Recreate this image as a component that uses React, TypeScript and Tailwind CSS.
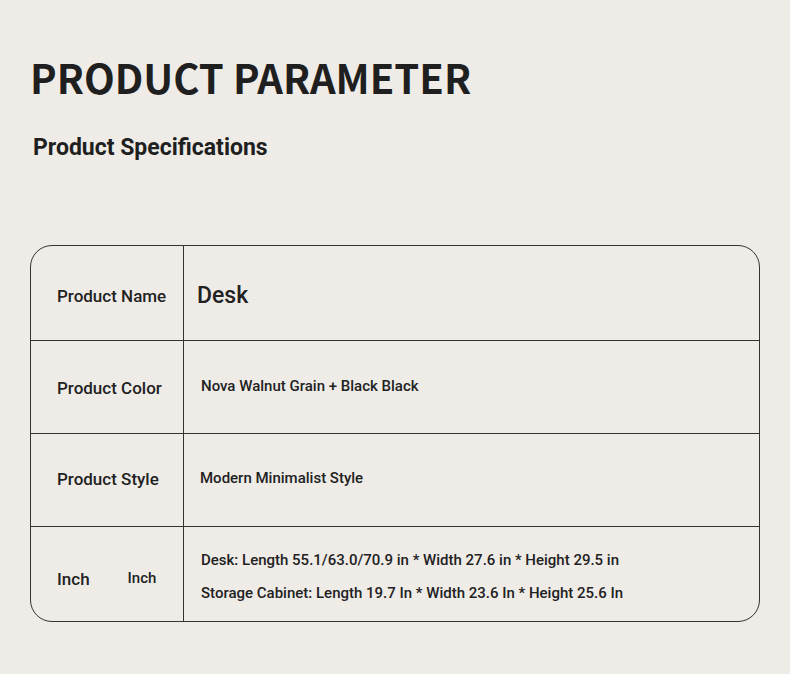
import React from 'react';

// ── Data ───────────────────────────────────────────────────────────────────────

const ROWS: { label: string; h: string }[] = [
  { label: 'Product Name', h: 'h-[95px]' },
  { label: 'Product Color', h: 'h-[93px]' },
  { label: 'Product Style', h: 'h-[93px]' },
];

export default function App() {
  return (
    <div
      className="w-[790px] h-[674px] bg-[#efece8] text-[#222] pt-[49px]"
      style={{ fontFamily: 'Roboto, "Liberation Sans", sans-serif' }}
    >
      {/* Heading */}
      <h1
        className="pl-[30px] text-[40px] leading-[56px] font-bold text-[#1f1f1f]"
        style={{ fontFamily: '"Noto Sans CJK SC", "Noto Sans", sans-serif' }}
      >
        PRODUCT PARAMETER
      </h1>
      <h2 className="pl-[33px] mt-[29px] text-[23px] leading-[28px] font-bold text-[#1f1f1f]">
        Product Specifications
      </h2>

      {/* Spec table */}
      <div className="ml-[30px] mt-[83px] w-[730px] border border-[#333] rounded-[22px] overflow-hidden">
        {ROWS.map((row, i) => (
          <div key={row.label} className={`flex border-b border-[#333] ${row.h}`}>
            <div
              className={`w-[153px] shrink-0 border-r border-[#333] flex items-center pl-[26px] text-[17px] font-medium ${
                i === 0 ? 'pt-[8px]' : i === 1 ? 'pt-[4px]' : ''
              }`}
            >
              {row.label}
            </div>
            <div className="flex-1 flex items-center">
              {i === 0 && <span className="pl-[13px] text-[23px] font-medium pt-[6px]">Desk</span>}
              {i === 1 && (
                <span className="pl-[17px] text-[15px] font-medium pb-[2px]">
                  Nova Walnut Grain + Black Black
                </span>
              )}
              {i === 2 && (
                <span className="pl-[16px] text-[15px] font-medium pb-[4px]">
                  Modern Minimalist Style
                </span>
              )}
            </div>
          </div>
        ))}
        <div className="flex h-[94px]">
          <div className="w-[153px] shrink-0 border-r border-[#333] flex items-center pl-[26px] pt-[11px]">
            <span className="text-[17px] font-medium">Inch</span>
            <span className="ml-[38px] text-[15px] font-medium pb-[2px]">Inch</span>
          </div>
          <div className="flex-1 flex flex-col justify-center pl-[17px] gap-[11px] text-[15px] font-medium pt-[5px]">
            <span>Desk: Length 55.1/63.0/70.9 in * Width 27.6 in * Height 29.5 in</span>
            <span>Storage Cabinet: Length 19.7 In * Width 23.6 In * Height 25.6 In</span>
          </div>
        </div>
      </div>
    </div>
  );
}
